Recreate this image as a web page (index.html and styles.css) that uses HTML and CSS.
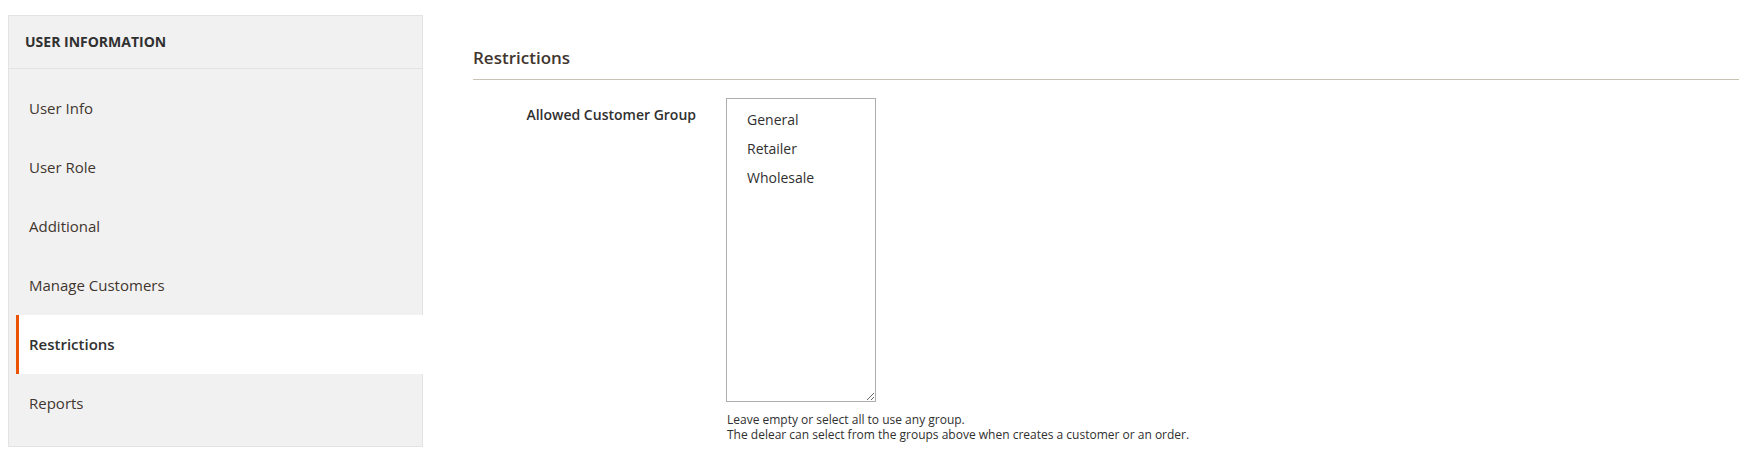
FILE: index.html
```html
<!DOCTYPE html>
<html>
<head>
    <title>User Information - Restrictions</title>
    <link rel="stylesheet" href="styles.css">
</head>
<body>
    <div class="page">
        <div class="page-nav">
            <div class="page-nav-title">User Information</div>
            <ul class="page-nav-items">
                <li class="page-nav-item"><a href="#" class="page-nav-link">User Info</a></li>
                <li class="page-nav-item"><a href="#" class="page-nav-link">User Role</a></li>
                <li class="page-nav-item"><a href="#" class="page-nav-link">Additional</a></li>
                <li class="page-nav-item"><a href="#" class="page-nav-link">Manage Customers</a></li>
                <li class="page-nav-item active"><a href="#" class="page-nav-link">Restrictions</a></li>
                <li class="page-nav-item"><a href="#" class="page-nav-link">Reports</a></li>
            </ul>
        </div>

        <div class="main">
            <div class="fieldset-title">Restrictions</div>

            <div class="field">
                <label class="field-label" for="customer_group">Allowed Customer Group</label>
                <div class="field-control">
                    <select id="customer_group" class="multiselect" multiple>
                        <option value="1">General</option>
                        <option value="3">Retailer</option>
                        <option value="2">Wholesale</option>
                    </select>
                    <div class="field-note">
                        Leave empty or select all to use any group.<br>
                        The delear can select from the groups above when creates a customer or an order.
                    </div>
                </div>
            </div>
        </div>
    </div>
</body>
</html>
```

FILE: styles.css
```css
body {
    font-family: 'Open Sans', 'Helvetica Neue', Helvetica, Arial, sans-serif;
    font-size: 14px;
    line-height: 19px;
    color: #303030;
    background-color: #ffffff;
    margin: 0;
    padding: 0;
}
.page {
    display: flex;
    gap: 50px;
    padding: 15px 10px 0 8px;
}

/* left tabs */
.page-nav {
    width: 413px;
    flex: none;
    align-self: flex-start;
    background-color: #f1f1f1;
    border: 1px solid #e3e3e3;
}
.page-nav-title {
    padding: 16px 16px 17px;
    border-bottom: 1px solid #e3e3e3;
    font-weight: 700;
    text-transform: uppercase;
    color: #303030;
}
.page-nav-items {
    list-style: none;
    margin: 0;
    padding: 10px 0 13px;
}
.page-nav-item {
    margin-left: 7px;
}
.page-nav-link {
    display: block;
    padding: 20px 40px 20px 10px;
    border-left: 3px solid transparent;
    font-size: 15px;
    line-height: 19px;
    color: #41362f;
    text-decoration: none;
}
.page-nav-item.active .page-nav-link {
    background-color: #ffffff;
    border-left-color: #eb5202;
    margin-right: -1px;
    font-weight: 600;
    color: #303030;
}

/* right column */
.main {
    flex: 1;
    padding-top: 31px;
}
.fieldset-title {
    font-size: 17px;
    line-height: 23px;
    font-weight: 600;
    color: #41362f;
    padding-bottom: 10px;
    border-bottom: 1px solid #cac3b4;
}
.field {
    display: flex;
    margin-top: 18px;
}
.field-label {
    width: 223px;
    padding-right: 30px;
    padding-top: 7px;
    text-align: right;
    font-weight: 600;
    color: #303030;
}
.multiselect {
    display: block;
    width: 150px;
    height: 304px;
    box-sizing: border-box;
    margin: 0;
    padding: 6px 0;
    border: 1px solid #adadad;
    border-radius: 0;
    background: #ffffff;
    font-family: inherit;
    font-size: 14px;
    color: #303030;
    outline: none;
    resize: vertical;
    overflow: auto;
}
.multiselect option {
    padding: 5px 20px;
    line-height: 19px;
}
.field-note {
    margin-top: 10px;
    padding-left: 1px;
    font-size: 12px;
    line-height: 15px;
    color: #303030;
}
```
